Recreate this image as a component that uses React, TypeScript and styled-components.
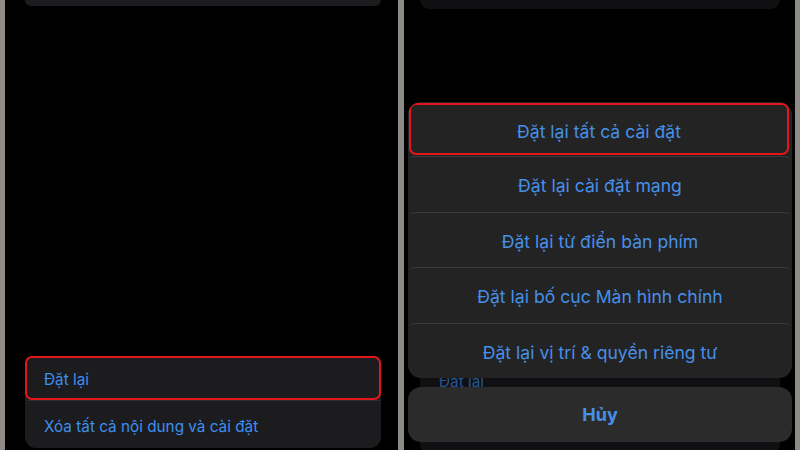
import styled, { createGlobalStyle } from "styled-components";

const GlobalStyle = createGlobalStyle`
  html, body {
    margin: 0;
    padding: 0;
    background: #8e8a85;
  }
  body {
    font-family: Inter, "Noto Sans", "Liberation Sans", sans-serif;
  }
`;

const Frame = styled.div`
  display: flex;
  gap: 6px;
  width: 800px;
  height: 450px;
  padding-left: 5px;
  box-sizing: border-box;
  background-color: #8e8a85;
  overflow: hidden;
`;

const Phone = styled.div<{ $width: number }>`
  position: relative;
  display: flex;
  flex-direction: column;
  justify-content: space-between;
  width: ${(p) => p.$width}px;
  height: 450px;
  background-color: #000;
  overflow: hidden;
`;

const TopCard = styled.div<{ $h: number; $ml: number; $mr: number }>`
  height: ${(p) => p.$h}px;
  margin: 0 ${(p) => p.$mr}px 0 ${(p) => p.$ml}px;
  background-color: #1c1c1e;
  border-radius: 0 0 11px 11px;
`;

const Group = styled.div<{ $ml: number; $mr: number; $mb: number }>`
  display: flex;
  flex-direction: column;
  margin: 0 ${(p) => p.$mr}px ${(p) => p.$mb}px ${(p) => p.$ml}px;
  background-color: #1c1c1e;
  border-radius: 11px;
`;

const Row = styled.div<{ $h: number; $marked?: boolean }>`
  display: flex;
  align-items: center;
  height: ${(p) => p.$h}px;
  padding: 3px 0 0 17px;
  box-sizing: border-box;
  font-size: 15.3px;
  color: #3d8ff0;
  border: 2px solid ${(p) => (p.$marked ? "#e3161c" : "transparent")};
  border-radius: 7px;
`;

const Separator = styled.div`
  height: 1px;
  margin-left: 2px;
  background-color: #2e2e30;
`;

const Dim = styled.div`
  position: absolute;
  inset: 0;
  background-color: rgba(0, 0, 0, 0.4);
`;

const Sheet = styled.div`
  position: absolute;
  left: 4px;
  right: 3px;
  bottom: 8px;
  display: flex;
  flex-direction: column;
  gap: 9px;
`;

const ActionGroup = styled.div`
  display: flex;
  flex-direction: column;
  background-color: #232323;
  border-radius: 13px;
  overflow: hidden;
`;

const Action = styled.div<{ $marked?: boolean }>`
  display: flex;
  align-items: center;
  justify-content: center;
  padding-top: 5px;
  box-sizing: border-box;
  font-size: 17.6px;
  color: #4790e8;
  border: 2px solid ${(p) => (p.$marked ? "#e3161c" : "transparent")};
  border-radius: 7px;
  margin: ${(p) => (p.$marked ? "1px 3px 1px 1px" : "0")};
  height: ${(p) => (p.$marked ? "52px" : "55.5px")};

  & + & {
    border-top: 1px solid #3a3a3a;
  }
`;

const Cancel = styled.div`
  display: flex;
  align-items: center;
  justify-content: center;
  height: 55px;
  background-color: #2b2b2b;
  border-radius: 13px;
  font-size: 18px;
  font-weight: 700;
  color: #4790e8;
`;

const actions = [
  "Đặt lại tất cả cài đặt",
  "Đặt lại cài đặt mạng",
  "Đặt lại từ điển bàn phím",
  "Đặt lại bố cục Màn hình chính",
  "Đặt lại vị trí & quyền riêng tư",
];

export default function App() {
  return (
    <>
      <GlobalStyle />
      <Frame>
        <Phone $width={393}>
          <TopCard $h={6} $ml={20} $mr={17} />
          <Group $ml={20} $mr={17} $mb={2}>
            <Row $h={44} $marked>
              Đặt lại
            </Row>
            <Separator />
            <Row $h={47}>Xóa tất cả nội dung và cài đặt</Row>
          </Group>
        </Phone>

        <Phone $width={391}>
          <TopCard $h={9} $ml={16} $mr={15} />
          <Group $ml={16} $mr={15} $mb={-4}>
            <Row $h={52}>Đặt lại</Row>
            <Separator />
            <Row $h={47}>Xóa tất cả nội dung và cài đặt</Row>
          </Group>
          <Dim />
          <Sheet>
            <ActionGroup>
              {actions.map((a, i) => (
                <Action key={a} $marked={i === 0}>
                  {a}
                </Action>
              ))}
            </ActionGroup>
            <Cancel>Hủy</Cancel>
          </Sheet>
        </Phone>
      </Frame>
    </>
  );
}
